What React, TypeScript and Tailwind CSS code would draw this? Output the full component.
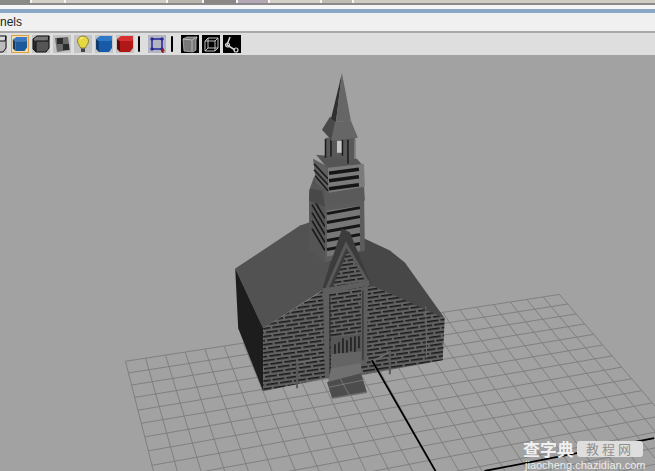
import React from "react";

type P = [number, number];

function homography(q: P[]) {
  const [[x0, y0], [x1, y1], [x2, y2], [x3, y3]] = q;
  const dx1 = x1 - x2, dx2 = x3 - x2, sx = x0 - x1 + x2 - x3;
  const dy1 = y1 - y2, dy2 = y3 - y2, sy = y0 - y1 + y2 - y3;
  const det = dx1 * dy2 - dx2 * dy1;
  const g = (sx * dy2 - dx2 * sy) / det;
  const h = (dx1 * sy - sx * dy1) / det;
  const a = x1 - x0 + g * x1, b = x3 - x0 + h * x3, c = x0;
  const d = y1 - y0 + g * y1, e = y3 - y0 + h * y3, f = y0;
  return (u: number, v: number): P => {
    const w = g * u + h * v + 1;
    return [(a * u + b * v + c) / w, (d * u + e * v + f) / w];
  };
}

// corners: left, back, right, front of the 24 x 24 ground grid
const project = homography([[125, 361], [560, 294], [840, 621], [232, 781]]);
const gridPath = (() => {
  let s = "";
  for (let i = 0; i <= 24; i++) {
    const t = i / 24;
    const a = project(t, 0), b = project(t, 1), c = project(0, t), d = project(1, t);
    s += `M${a[0].toFixed(1)} ${a[1].toFixed(1)}L${b[0].toFixed(1)} ${b[1].toFixed(1)}`;
    s += `M${c[0].toFixed(1)} ${c[1].toFixed(1)}L${d[0].toFixed(1)} ${d[1].toFixed(1)}`;
  }
  return s;
})();

function Poly({ p, f }: { p: string; f: string }) {
  return <polygon points={p} fill={f} />;
}

function Church() {
  return (
    <g>
      {/* Main roof */}
      <Poly p="300,225 360,236 372,288 322,292" f="#444444" />
      <Poly p="235,268 300,225 312,221 330,262 322,290 263,328" f="#525252" />
      <Poly p="360,236 390,250 405,262 445,318 370,287 345,240" f="#474747" />
      {/* Left dark wall */}
      <Poly p="235,268 263,328 263,391 238,328" f="#1d1d1d" />
      {/* Brick walls */}
      <Poly p="263,328 323,290 370,284 445,318 443,360 366,374 326,378 263,391" f="url(#brick)" />
      <path d="M426 306L427 358" stroke="#6b6b6b" strokeWidth="1" />

      {/* Lower tower */}
      <Poly p="309,190 314,176 327,190 325,262 309,250" f="#555555" />
      <path d="M312 196L325 218M312 204L325 226M312 212L325 234M312 220L325 242M312 228L325 250" stroke="#181818" strokeWidth="1.600" />
      <Poly p="325,192 364,186 365,250 325,262" f="#5c5c5c" />
      <Poly p="327,210 360,205 360,250 327,256" f="#777777" />
      <path d="M327 213L360 207M327 222L360 216M327 231L360 225M327 240L360 234M327 249L360 243" stroke="#161616" strokeWidth="3" />
      <Poly p="325,190 364,184 365,200 324,205" f="#5a5a5a" />
      <Poly p="310,188 322,190 325,206 309,200" f="#484848" />
      {/* Upper tower */}
      <Poly p="313,158 328,166 329,192 316,182" f="#5f5f5f" />
      <path d="M314 163L328 178M314 169L328 184M315 175L328 190" stroke="#1a1a1a" strokeWidth="1.600" />
      <Poly p="316,154 357,158 364,166 328,168" f="#555555" />
      <Poly p="328,167 364,163 365,186 329,192" f="#7b7b7b" />
      <path d="M329 172.500L359 168.500M329 180L359 176M329 188L359 184" stroke="#151515" strokeWidth="3.500" />
      {/* Belfry */}
      <Poly p="326,137 355,137 354,160 326,155" f="#595959" />
      <rect x="337" y="140" width="5" height="12" fill="#c4c4c4" />
      <path d="M325.500 138V157M331 139V156M342.500 139V155M348 139V163" stroke="#1a1a1a" strokeWidth="1.500" />
      <path d="M355 138V158" stroke="#777" strokeWidth="1.500" />
      {/* Belfry roof */}
      <Poly p="322,129 330,116 336,121 332,140" f="#494949" />
      <Poly p="335,121 351,120 358,137 331,140" f="#666666" />
      {/* Spire */}
      <Poly p="342,72 331,118 336,121" f="#2f2f2f" />
      <Poly p="342,72 336,121 351,120" f="#666666" />

      {/* Front gable */}
      <Poly p="322,290 342,228 350,232 372,286 350,282" f="#3c3c3c" />
      <Poly p="348,250 332,288 367,282" f="url(#brick)" />
      <path d="M327 288L346 244L368 282" fill="none" stroke="#595959" strokeWidth="3" />
      <Poly p="322,288 369,280 370,285 323,294" f="#5e5e5e" />
      {/* Frame */}
      <Poly p="323,292 329,292 330,376 325,378" f="#5e5e5e" />
      <Poly p="361,287 368,285 367,365 361,366" f="#5e5e5e" />
      <path d="M330 296V374M363 290V360" stroke="#2a2a2a" strokeWidth="1" />
      {/* Door */}
      <Poly p="331,337 361,334 361,366 331,372" f="#565656" />
      <path d="M335 344V356M339 342V353M343 338V354M347 340V354M351 337V351M355 336V352M359 336V348" stroke="#1c1c1c" strokeWidth="1.500" />
      <Poly p="331,354 361,351 361,367 331,372" f="#646464" />
      {/* Steps */}
      <Poly p="331,368 361,363 362,376 328,382" f="#707070" />
      <Poly p="327,382 361,373 367,392 332,398" f="#4d4d4d" />
      <path d="M332 398L367 392" stroke="#6e6e6e" strokeWidth="1.500" />
      <path d="M340 378L350 396M329 387L363 380" stroke="#7e7e7e" strokeWidth="0.800" />
      {/* Rails */}
      <path d="M297 363L322 358M371 362L391 351" stroke="#6c6c6c" strokeWidth="1.500" fill="none" />
      <path d="M297 363V388M390 352V374" stroke="#5a5a5a" strokeWidth="2" />
    </g>
  );
}

function Cube({ top, left, right, line }: { top: string; left: string; right: string; line?: string }) {
  return (
    <svg viewBox="0 0 18 18" className="w-[18px] h-[18px] block">
      <polygon points="1,4 5,1 17,1 16,6 4,6" fill={top} />
      <polygon points="1,4 4,6 4,17 1,14" fill={left} />
      <polygon points="4,6 16,6 17,1 17,13 14,17 4,17" fill={right} />
      {line ? <path d="M1 4L5 1H17V13L14 17H4L1 14ZM4 6H16L17 1M4 6V17" fill="none" stroke={line} strokeWidth="1" /> : null}
    </svg>
  );
}

function Separator({ className }: { className: string }) {
  return <div className={`w-[2px] h-[16px] bg-black rounded-sm ${className}`} />;
}

function Toolbar() {
  return (
    <div className="h-[21px] bg-[#dedede] flex items-center gap-[3px] overflow-hidden">
      <div className="w-[7px] h-[18px] overflow-hidden relative bg-[#c8c8c8]">
        <div className="absolute right-0 top-0">
          <Cube top="#d8d8d8" left="#9a9a9a" right="#bcbcbc" line="#111111" />
        </div>
      </div>
      <div className="ml-[1px] border border-[#e0a040] bg-[#f0dfb0] w-[18px] h-[18px] overflow-hidden flex items-center justify-center">
        <Cube top="#3a78c8" left="#123a6a" right="#1c5a9c" />
      </div>
      <div className="bg-[#c4c4c4]"><Cube top="#777777" left="#2c2c2c" right="#555555" line="#111111" /></div>
      <div className="bg-[#c4c4c4]">
        <svg viewBox="0 0 18 18" className="w-[18px] h-[18px] block">
          <polygon points="2,3 15,2 17,15 4,17" fill="#6b6b6b" />
          <rect x="4" y="3" width="6" height="6" fill="#2c2c2c" />
          <rect x="10" y="9" width="6" height="6" fill="#2c2c2c" />
        </svg>
      </div>
      <div className="bg-[#c4c4c4]">
        <svg viewBox="0 0 18 18" className="w-[18px] h-[18px] block">
          <path d="M9 1C5.500 1 3.500 3.500 3.500 6C3.500 9 6 10.500 6.500 13H11.500C12 10.500 14.500 9 14.500 6C14.500 3.500 12.500 1 9 1Z" fill="#e8d840" stroke="#77702a" strokeWidth="0.800" />
          <path d="M6.500 4C7 3 8 2.500 9 2.500" stroke="#fff8c0" strokeWidth="1.200" fill="none" />
          <rect x="7" y="13.500" width="4" height="3.500" fill="#444444" />
        </svg>
      </div>
      <div className="bg-[#c4c4c4]"><Cube top="#2e78c8" left="#0f3a70" right="#165aa8" /></div>
      <div className="bg-[#c4c4c4]"><Cube top="#d83030" left="#600c0c" right="#b01818" /></div>
      <Separator className="ml-[1px]" />
      <div className="ml-[5px] bg-[#b4b4c0]">
        <svg viewBox="0 0 18 18" className="w-[18px] h-[18px] block">
          <rect x="4" y="4" width="10" height="10" fill="none" stroke="#1c1c9c" strokeWidth="1.400" />
          <path d="M2 4H6M12 4H16M2 14H6M12 14H16M4 2V6M14 2V6M4 12V16M14 12V16" stroke="#1c1c9c" strokeWidth="1" />
          <path d="M13 12L17 16L15 16.500L16 18H14.500L13.500 16.500L13 17Z" fill="#8c1818" />
        </svg>
      </div>
      <Separator className="ml-[2px]" />
      <div className="ml-[5px] bg-black">
        <svg viewBox="0 0 18 18" className="w-[18px] h-[18px] block">
          <polygon points="2,4 6,2 16,2 15,5 15,15 12,17 3,16" fill="#787878" stroke="#b8b8b8" strokeWidth="0.800" />
          <path d="M2 4L11 5V16M11 5L16 2" stroke="#c8c8c8" strokeWidth="0.800" fill="none" />
        </svg>
      </div>
      <div className="bg-black">
        <svg viewBox="0 0 18 18" className="w-[18px] h-[18px] block">
          <path d="M3 6H13V16H3ZM6 3H16V13H6ZM3 6L6 3M13 6L16 3M13 16L16 13M3 16L6 13" fill="none" stroke="#d4d4d4" strokeWidth="0.900" />
        </svg>
      </div>
      <div className="bg-black">
        <svg viewBox="0 0 18 18" className="w-[18px] h-[18px] block">
          <path d="M7 2L4 10L12 15" fill="none" stroke="#d4d4d4" strokeWidth="1.500" />
          <circle cx="4.500" cy="10" r="2" fill="none" stroke="#d4d4d4" strokeWidth="1.200" />
          <circle cx="13" cy="15" r="2" fill="none" stroke="#d4d4d4" strokeWidth="1.200" />
        </svg>
      </div>
    </div>
  );
}

export default function App() {
  return (
    <div className="w-[655px] h-[471px] flex flex-col overflow-hidden bg-[#a2a2a2] font-['Liberation_Sans',sans-serif]">
      <div className="h-[3px] flex gap-[2px] bg-[#f4f4f4]">
        <div className="w-[30px] bg-[#8c8a84]" />
        <div className="w-[32px] bg-[#d4d0c8]" />
        <div className="w-[100px] bg-[#cfcbc4]" />
        <div className="w-[34px] bg-[#b8b4ac]" />
        <div className="w-[32px] bg-[#8a8784]" />
        <div className="w-[30px] bg-[#b4a8b4]" />
        <div className="w-[50px] bg-[#d4d0c8]" />
        <div className="w-[30px] bg-[#c0bcb4]" />
        <div className="flex-1 bg-[#d0ccc4]" />
      </div>
      <div className="h-[2px] bg-[#8a8a8a]" />
      <div className="h-[4px] bg-[#f6f6f6]" />
      <div className="h-[4px] bg-[#88a8c4]" />
      <div className="h-[18px] bg-[#f0f0f0] flex items-center text-[12px] leading-none text-[#222222]">nels</div>
      <div className="h-[2px] bg-[#a8a8a8]" />
      <Toolbar />
      <div className="h-[1px] bg-[#dcdcdc]" />
      <div className="relative flex-1 overflow-hidden">
        <svg viewBox="0 54 655 417" className="w-full h-full block blur-[0.35px]">
          <defs>
            <pattern id="brick" width="14" height="8" patternUnits="userSpaceOnUse" patternTransform="rotate(-8)">
              <rect width="14" height="8" fill="#626262" />
              <rect x="0" y="1" width="12" height="1.600" fill="#1a1a1a" />
              <rect x="7" y="5" width="12" height="1.600" fill="#1a1a1a" />
              <rect x="-7" y="5" width="12" height="1.600" fill="#1a1a1a" />
            </pattern>
          </defs>
          <path d={gridPath} stroke="#808080" strokeWidth="1" fill="none" />
          <Church />
          <path d="M372 360L438 475M485 471L655 438" stroke="#000000" strokeWidth="1.800" fill="none" />
        </svg>
        {/* Watermark */}
        <div className="absolute left-[523px] top-[385px] flex items-center gap-[3px]">
          <span className="text-[17px] leading-[18px] font-bold text-[#f0f0f0] font-['Noto_Sans_CJK_SC',sans-serif]">查字典</span>
          <span className="w-[66px] h-[16px] bg-[#dedede] rounded-[3px] text-[13px] leading-[16px] text-center tracking-[3px] text-[#909090] font-['Noto_Sans_CJK_SC',sans-serif]">教程网</span>
        </div>
        <div className="absolute left-[525px] top-[404px] text-[11px] leading-[12px] text-[#ececec]">jiaocheng.chazidian.com</div>
      </div>
    </div>
  );
}
